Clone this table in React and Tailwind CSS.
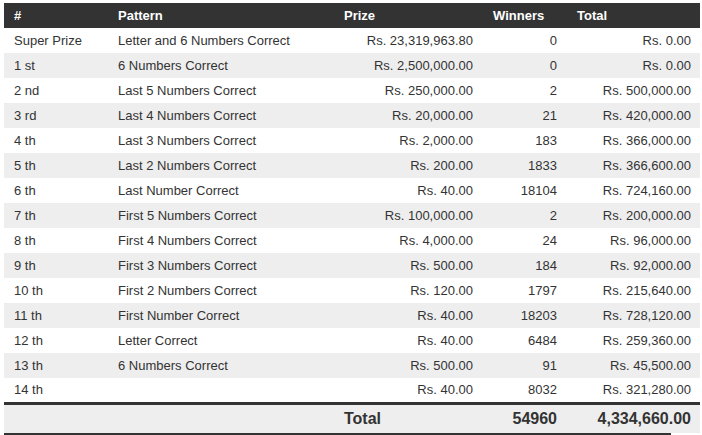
import React from 'react';

const rows = [
  ['Super Prize', 'Letter and 6 Numbers Correct', 'Rs. 23,319,963.80', '0', 'Rs. 0.00'],
  ['1 st', '6 Numbers Correct', 'Rs. 2,500,000.00', '0', 'Rs. 0.00'],
  ['2 nd', 'Last 5 Numbers Correct', 'Rs. 250,000.00', '2', 'Rs. 500,000.00'],
  ['3 rd', 'Last 4 Numbers Correct', 'Rs. 20,000.00', '21', 'Rs. 420,000.00'],
  ['4 th', 'Last 3 Numbers Correct', 'Rs. 2,000.00', '183', 'Rs. 366,000.00'],
  ['5 th', 'Last 2 Numbers Correct', 'Rs. 200.00', '1833', 'Rs. 366,600.00'],
  ['6 th', 'Last Number Correct', 'Rs. 40.00', '18104', 'Rs. 724,160.00'],
  ['7 th', 'First 5 Numbers Correct', 'Rs. 100,000.00', '2', 'Rs. 200,000.00'],
  ['8 th', 'First 4 Numbers Correct', 'Rs. 4,000.00', '24', 'Rs. 96,000.00'],
  ['9 th', 'First 3 Numbers Correct', 'Rs. 500.00', '184', 'Rs. 92,000.00'],
  ['10 th', 'First 2 Numbers Correct', 'Rs. 120.00', '1797', 'Rs. 215,640.00'],
  ['11 th', 'First Number Correct', 'Rs. 40.00', '18203', 'Rs. 728,120.00'],
  ['12 th', 'Letter Correct', 'Rs. 40.00', '6484', 'Rs. 259,360.00'],
  ['13 th', '6 Numbers Correct', 'Rs. 500.00', '91', 'Rs. 45,500.00'],
  ['14 th', '', 'Rs. 40.00', '8032', 'Rs. 321,280.00'],
];

export default function App() {
  return (
    <div className="pt-[3px] pl-[4px] bg-white text-[#333] text-[13px] font-['Liberation_Sans',Arial,sans-serif]">
      <table className="w-[696px] border-collapse table-fixed">
        <colgroup>
          <col className="w-[104px]" />
          <col className="w-[226px]" />
          <col className="w-[149px]" />
          <col className="w-[84px]" />
          <col className="w-[133px]" />
        </colgroup>
        <thead>
          <tr className="h-[25px] bg-[#333] text-white font-bold text-left">
            <th className="px-[10px] p-0">#</th>
            <th className="px-[10px] p-0">Pattern</th>
            <th className="px-[10px] p-0">Prize</th>
            <th className="px-[10px] p-0">Winners</th>
            <th className="px-[10px] p-0">Total</th>
          </tr>
        </thead>
        <tbody>
          {rows.map((r, i) => (
            <tr key={i} className={`h-[25px] ${i % 2 === 1 ? 'bg-[#eeeeee]' : 'bg-white'}`}>
              <td className="px-[10px] whitespace-nowrap">{r[0]}</td>
              <td className="px-[10px] whitespace-nowrap">{r[1]}</td>
              <td className="px-[10px] text-right whitespace-nowrap">{r[2]}</td>
              <td className="px-[10px] text-right whitespace-nowrap">{r[3]}</td>
              <td className="pl-[10px] pr-[9px] text-right whitespace-nowrap">{r[4]}</td>
            </tr>
          ))}
          <tr className="h-[30px] bg-[#eeeeee] border-t-[3px] border-[#333] font-bold text-[16px]">
            <td></td>
            <td></td>
            <td className="px-[10px]">Total</td>
            <td className="px-[10px] text-right">54960</td>
            <td className="pl-[10px] pr-[9px] text-right">4,334,660.00</td>
          </tr>
        </tbody>
      </table>
      <div className="w-[667px] h-[2px] bg-[#333]" />
    </div>
  );
}
